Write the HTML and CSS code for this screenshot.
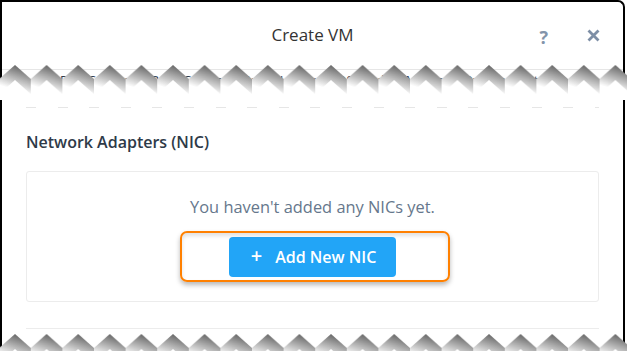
FILE: index.html
```html
<!DOCTYPE html>
<html lang="en">
<head>
<meta charset="utf-8">
<title>Create VM</title>
<link rel="stylesheet" href="styles.css">
</head>
<body>
<div class="page">
  <div class="modal">
    <div class="header">
      <div></div>
      <div class="title">Create VM</div>
      <div class="actions">
        <span class="help">?</span>
        <svg class="close" viewBox="0 0 13 13" aria-label="Close"><path d="M1.5 1.5 L11.5 11.5 M11.5 1.5 L1.5 11.5" stroke="#7d8ea5" stroke-width="2.8" fill="none"/></svg>
      </div>
    </div>
    <div class="cut">
      <div class="tabs">Disk Settings&nbsp;&nbsp;&nbsp;&nbsp;Boot Configuration&nbsp;&nbsp;&nbsp;(Legacy BIOS Mode)&nbsp;&nbsp;&nbsp;Memory&nbsp;&nbsp;Overcommit</div>
    </div>
    <div class="content">
      <div class="dash"></div>
      <h2 class="section-title">Network Adapters (NIC)</h2>
      <div class="card">
        <p class="empty">You haven't added any NICs yet.</p>
        <div class="btn-wrap">
          <button class="btn-primary" type="button"><span class="plus">+</span><span>Add New NIC</span></button>
          <div class="highlight"></div>
        </div>
      </div>
      <div class="rule"></div>
    </div>
  </div>

  <svg class="tear tear-top" width="627" height="40" viewBox="0 0 627 40">
    <defs>
      <linearGradient id="gt" gradientUnits="userSpaceOnUse" x1="20" y1="5" x2="12" y2="29">
        <stop offset="0" stop-color="#5f5f5f"/>
        <stop offset="0.45" stop-color="#a8a8a8"/>
        <stop offset="1" stop-color="#ffffff"/>
      </linearGradient>
      <filter id="ft" x="-5%" y="-20%" width="110%" height="140%"><feGaussianBlur stdDeviation="0.5"/></filter>
      <pattern id="pt" patternUnits="userSpaceOnUse" x="-0.8" y="0" width="31.6" height="40">
        <polygon points="0,19 15.8,5 31.6,19 31.6,40 0,40" fill="url(#gt)"/>
        <polygon points="0,34 15.8,20 31.6,34 31.6,40 0,40" fill="#ffffff"/>
      </pattern>
    </defs>
    <rect width="627" height="40" fill="url(#pt)" filter="url(#ft)"/>
  </svg>

  <svg class="tear tear-bottom" width="627" height="40" viewBox="0 0 627 40">
    <defs>
      <linearGradient id="gb" gradientUnits="userSpaceOnUse" x1="20" y1="5" x2="12" y2="29">
        <stop offset="0" stop-color="#5f5f5f"/>
        <stop offset="0.45" stop-color="#a8a8a8"/>
        <stop offset="1" stop-color="#ffffff"/>
      </linearGradient>
      <filter id="fb" x="-5%" y="-20%" width="110%" height="140%"><feGaussianBlur stdDeviation="0.5"/></filter>
      <pattern id="pb" patternUnits="userSpaceOnUse" x="-0.8" y="0" width="31.6" height="40">
        <polygon points="0,19 15.8,5 31.6,19 31.6,40 0,40" fill="url(#gb)"/>
        <polygon points="0,34 15.8,20 31.6,34 31.6,40 0,40" fill="#ffffff"/>
      </pattern>
    </defs>
    <rect width="627" height="40" fill="url(#pb)" filter="url(#fb)"/>
  </svg>
</div>
</body>
</html>
```

FILE: styles.css
```css
* { box-sizing: border-box; }

html, body {
  margin: 0;
  padding: 0;
  background: #ffffff;
}

body {
  font-family: "Open Sans", "Liberation Sans", sans-serif;
  color: #333;
}

.page {
  position: relative;
  width: 627px;
  height: 351px;
  overflow: hidden;
  background: #ffffff;
}

.modal {
  width: 625px;
  height: 370px;
  border: 2px solid #000;
  border-bottom: 0;
  border-radius: 0 7px 0 0;
  background: #ffffff;
}

.header {
  height: 66px;
  display: grid;
  grid-template-columns: 1fr auto 1fr;
  align-items: center;
}

.title {
  font-size: 17px;
  line-height: 22px;
  color: #333;
}

.actions {
  display: flex;
  justify-content: flex-end;
  align-items: center;
  gap: 39px;
  padding-right: 23px;
}

.help {
  font-size: 18px;
  font-weight: 700;
  line-height: 18px;
  color: #8394aa;
  margin-top: 3px;
}

.close {
  width: 13px;
  height: 13px;
  display: block;
}

.cut {
  height: 32px;
  padding-top: 1px;
  overflow: hidden;
}

.tabs {
  border-top: 1px solid #e6e6e6;
  font-size: 13px;
  line-height: 16px;
  color: #2d3a4b;
  padding: 2px 0 0 58px;
  white-space: nowrap;
}

.content {
  padding: 7px 24px 0;
}

.dash {
  height: 1px;
  background: repeating-linear-gradient(90deg, #e6e6e6 0 10px, transparent 10px 31.6px);
}

.section-title {
  margin: 23px 0 0 0;
  font-size: 16px;
  line-height: 22px;
  font-weight: 600;
  color: #2e3a48;
}

.card {
  margin-top: 18px;
  border: 1px solid #ececec;
  border-radius: 3px;
  padding: 24px 0 24px;
  text-align: center;
}

.empty {
  margin: 0;
  font-size: 16.4px;
  line-height: 22px;
  color: #66778c;
}

.btn-wrap {
  position: relative;
  width: 167px;
  margin: 19px auto 0;
}

.btn-primary {
  width: 167px;
  height: 40px;
  border: 0;
  border-radius: 4px;
  background: #22a5f7;
  color: #ffffff;
  font-family: "Open Sans", "Liberation Sans", sans-serif;
  font-size: 16px;
  font-weight: 600;
  display: flex;
  align-items: center;
  justify-content: center;
  gap: 13px;
  padding: 0 0 0 2px;
}

.plus {
  font-size: 20px;
  font-weight: 600;
  line-height: 20px;
  margin-top: -2px;
}

.highlight {
  position: absolute;
  left: -49px;
  top: -6px;
  width: 270px;
  height: 51px;
  border: 2px solid #ff8000;
  border-radius: 7px;
  box-shadow: 0 3px 5px rgba(0, 0, 0, 0.28), inset 0 3px 4px rgba(0, 0, 0, 0.12);
  pointer-events: none;
}

.rule {
  margin-top: 26px;
  height: 1px;
  background: #ececec;
}

.tear {
  position: absolute;
  left: 0;
  display: block;
}

.tear-top {
  top: 60px;
}

.tear-bottom {
  top: 329px;
}
```
